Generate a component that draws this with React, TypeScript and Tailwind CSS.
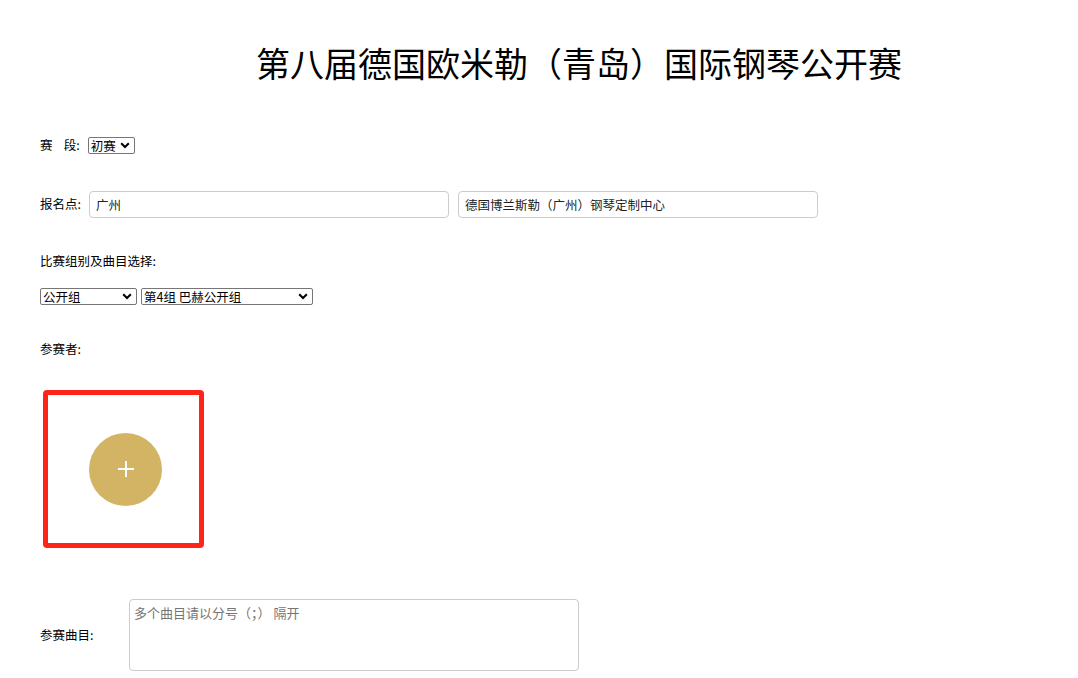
import { useState } from 'react';

const FONT = { fontFamily: '"Microsoft YaHei", "Noto Sans CJK SC", "Liberation Sans", sans-serif' };

function Chevron() {
  return (
    <svg width="10" height="7" viewBox="0 0 10 7" className="pointer-events-none absolute right-[5px] top-[5px]">
      <path d="M1.2 1.2 L5 5 L8.8 1.2" stroke="#000" strokeWidth="2" fill="none" />
    </svg>
  );
}

function Select({ value, options, width }: { value: string; options: string[]; width: string }) {
  const [v, setV] = useState(value);
  return (
    <div className={`relative h-[17px] ${width}`}>
      <select
        value={v}
        onChange={(e) => setV(e.target.value)}
        className="appearance-none w-full h-full border border-[#767676] rounded-[2px] bg-white pl-[2px] pr-[16px] text-[12.5px] leading-[15px] text-black outline-none"
        style={FONT}
      >
        {options.map((o) => (
          <option key={o} value={o}>{o}</option>
        ))}
      </select>
      <Chevron />
    </div>
  );
}

export default function App() {
  return (
    <div className="min-h-screen bg-white text-black text-[12.5px]" style={FONT}>
      <h1 className="pt-[41px] pl-[80px] text-center text-[34px] leading-[44px] font-normal">
        第八届德国欧米勒（青岛）国际钢琴公开赛
      </h1>

      <div className="px-[40px]">
        {/* 赛段 */}
        <div className="mt-[51px] flex items-center gap-[8px]">
          <span>赛&nbsp;&nbsp;&nbsp;&nbsp;段:</span>
          <Select value="初赛" options={['初赛', '复赛', '决赛']} width="w-[47px]" />
        </div>

        {/* 报名点 */}
        <div className="mt-[36px] flex items-center">
          <span className="w-[49px]">报名点:</span>
          <input
            type="text"
            defaultValue="广州"
            className="w-[360px] h-[27px] border border-[#ccc] rounded-[4px] px-[6px] text-[12.5px] text-[#222] outline-none"
            style={FONT}
          />
          <input
            type="text"
            defaultValue="德国博兰斯勒（广州）钢琴定制中心"
            className="ml-[9px] w-[360px] h-[27px] border border-[#ccc] rounded-[4px] px-[6px] text-[12.5px] text-[#222] outline-none"
            style={FONT}
          />
        </div>

        {/* 比赛组别 */}
        <div className="mt-[34px]">比赛组别及曲目选择:</div>
        <div className="mt-[17px] flex items-center gap-[4px]">
          <Select value="公开组" options={['公开组', '少年组', '儿童组']} width="w-[97px]" />
          <Select value="第4组 巴赫公开组" options={['第4组 巴赫公开组', '第1组', '第2组', '第3组']} width="w-[172px]" />
        </div>

        {/* 参赛者 */}
        <div className="mt-[35px]">参赛者:</div>
        <div className="mt-[32px] ml-[3px] w-[161px] h-[158px] border-[5px] border-[#ff2418] rounded-[4px] flex items-center justify-center">
          <button className="ml-[4px] w-[73px] h-[73px] rounded-full bg-[#d3b465] flex items-center justify-center">
            <svg width="20" height="20" viewBox="0 0 20 20">
              <path d="M10 2 V18 M2 10 H18" stroke="#fff" strokeWidth="2" />
            </svg>
          </button>
        </div>

        {/* 参赛曲目 */}
        <div className="mt-[51px] flex items-center">
          <span className="w-[89px]">参赛曲目:</span>
          <textarea
            placeholder="多个曲目请以分号（；） 隔开"
            className="w-[450px] h-[72px] border border-[#ccc] rounded-[4px] px-[4px] py-[3px] text-[13px] resize-none outline-none placeholder:text-[#757575]"
            style={FONT}
          />
        </div>
      </div>
    </div>
  );
}
